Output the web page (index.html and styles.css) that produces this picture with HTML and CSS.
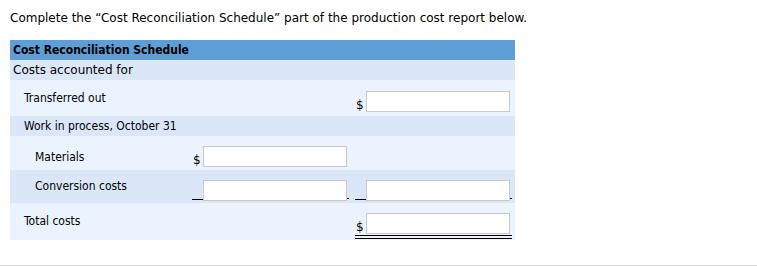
FILE: index.html
```html
<!DOCTYPE html>
<html>

<head>
	<meta http-equiv="Content-Type" content="text/html; charset=utf-8"/>
	<title>Cost Reconciliation Schedule</title>
	<link rel="stylesheet" href="styles.css">
</head>

<body>
<div class="question">
	<p class="prompt">Complete the “Cost Reconciliation Schedule” part of the production cost report below.</p>

	<table class="schedule">
		<colgroup>
			<col class="col-label"/>
			<col class="col-amount"/>
			<col class="col-amount last"/>
		</colgroup>
		<tr class="head h20">
			<th colspan="3">Cost Reconciliation Schedule</th>
		</tr>
		<tr class="dark section h20">
			<td colspan="3">Costs accounted for</td>
		</tr>
		<tr class="light h36">
			<td class="label lvl1 pad-11">Transferred out</td>
			<td></td>
			<td class="amount first-row">
				<div class="field"><span class="sign">$</span><input type="text"/></div>
			</td>
		</tr>
		<tr class="dark h20">
			<td class="label lvl1 pad-3" colspan="3">Work in process, October 31</td>
		</tr>
		<tr class="light h34">
			<td class="label lvl2 pad-14">Materials</td>
			<td class="amount">
				<div class="field"><span class="sign">$</span><input type="text"/></div>
			</td>
			<td></td>
		</tr>
		<tr class="dark h33">
			<td class="label lvl2 pad-9">Conversion costs</td>
			<td class="amount">
				<div class="field"><span class="sign rule"></span><input type="text"/><span class="tail"></span></div>
			</td>
			<td class="amount">
				<div class="field"><span class="sign rule"></span><input type="text"/><span class="tail"></span></div>
			</td>
		</tr>
		<tr class="light h37">
			<td class="label lvl1 pad-11">Total costs</td>
			<td></td>
			<td class="amount">
				<div class="field double"><span class="sign">$</span><input type="text"/><span class="tail plain"></span></div>
			</td>
		</tr>
	</table>
</div>
</body>

</html>
```

FILE: styles.css
```css
html {
	font-family: "DejaVu Sans", Verdana, sans-serif;
	font-size: 12px;
	color: #000;
}

body {
	margin: 0;
}

.question {
	padding: 0 10px 25px 10px;
	border-bottom: 1px solid #d3d8de;
}

.prompt {
	margin: 0;
	padding: 11px 0 14px 0;
	font-size: 12px;
	line-height: 15px;
}

.schedule {
	border-collapse: collapse;
	table-layout: fixed;
	width: 505px;
}

.col-label {
	width: 182px;
}

.col-amount {
	width: 163px;
}

.col-amount.last {
	width: 160px;
}

/* row heights, taken as minimums by the table */
.h20 { height: 20px; }
.h33 { height: 33px; }
.h34 { height: 34px; }
.h36 { height: 36px; }
.h37 { height: 37px; }

.schedule td,
.schedule th {
	padding: 0;
	line-height: 15px;
	vertical-align: top;
}

.head th {
	background-color: #5e9ed6;
	text-align: left;
	font-family: "DejaVu Sans Condensed", "DejaVu Sans", sans-serif;
	font-size: 12px;
	padding-left: 3px;
	vertical-align: middle;
}

.dark {
	background-color: #dbe7f8;
}

.light {
	background-color: #ebf4fe;
}

.section td {
	padding-left: 3px;
	vertical-align: middle;
}

.label {
	font-family: "DejaVu Sans Condensed", "DejaVu Sans", sans-serif;
	font-size: 12px;
}

.lvl1 {
	padding-left: 14px !important;
}

.lvl2 {
	padding-left: 25px !important;
}

.pad-3 {
	padding-top: 3px !important;
}

.pad-9 {
	padding-top: 9px !important;
}

.pad-11 {
	padding-top: 11px !important;
}

.pad-14 {
	padding-top: 14px !important;
}

.amount {
	padding-top: 10px !important;
}

.amount.first-row {
	padding-top: 11px !important;
}

.field {
	display: flex;
	align-items: flex-end;
	width: 157px;
}

.sign {
	width: 11px;
	font-size: 12px;
	line-height: 14px;
	padding-left: 1px;
	box-sizing: border-box;
}

.sign.rule {
	height: 2px;
	margin-bottom: 1px;
	border-bottom: 1px solid #000;
}

.tail {
	width: 2px;
	height: 1px;
	margin-bottom: 2px;
	background-color: #000;
}

.tail.plain {
	background: none;
}

.field.double {
	border-bottom: 4px double #000;
	padding-bottom: 1px;
	margin-bottom: -1px;
}

.field input {
	box-sizing: border-box;
	width: 144px;
	height: 21px;
	margin: 0;
	padding: 0 3px;
	border: 1px solid #c9c9c9;
	background-color: #fff;
	font-family: inherit;
	font-size: inherit;
}
```
